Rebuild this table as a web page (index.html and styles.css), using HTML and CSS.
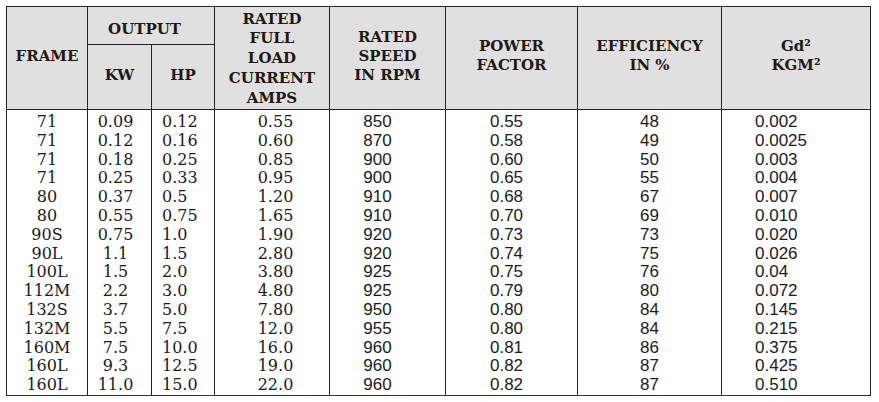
FILE: index.html
```html
<!DOCTYPE html>
<html>
<head>
<meta charset="utf-8">
<link rel="stylesheet" href="styles.css">
</head>
<body>
<table class="spec">
  <colgroup>
    <col class="w-frame"><col class="w-kw"><col class="w-hp"><col class="w-cur">
    <col class="w-spd"><col class="w-pf"><col class="w-eff"><col class="w-gd">
  </colgroup>
  <thead>
    <tr class="h1">
      <th rowspan="2" class="h-frame">FRAME</th>
      <th colspan="2" class="h-output">OUTPUT</th>
      <th rowspan="2" class="h-cur">RATED<br>FULL<br>LOAD<br>CURRENT<br>AMPS</th>
      <th rowspan="2" class="h-spd">RATED<br>SPEED<br>IN RPM</th>
      <th rowspan="2" class="h-pf">POWER<br>FACTOR</th>
      <th rowspan="2" class="h-eff">EFFICIENCY<br>IN %</th>
      <th rowspan="2" class="h-gd">Gd²<br>KGM²</th>
    </tr>
    <tr class="h2">
      <th class="h-kw">KW</th>
      <th class="h-hp">HP</th>
    </tr>
  </thead>
  <tbody>
    <tr class="first"><td class="c-frame">71</td><td class="c-kw">0.09</td><td class="c-hp">0.12</td><td class="c-cur">0.55</td><td class="c-spd">850</td><td class="c-pf">0.55</td><td class="c-eff">48</td><td class="c-gd">0.002</td></tr>
    <tr><td class="c-frame">71</td><td class="c-kw">0.12</td><td class="c-hp">0.16</td><td class="c-cur">0.60</td><td class="c-spd">870</td><td class="c-pf">0.58</td><td class="c-eff">49</td><td class="c-gd">0.0025</td></tr>
    <tr><td class="c-frame">71</td><td class="c-kw">0.18</td><td class="c-hp">0.25</td><td class="c-cur">0.85</td><td class="c-spd">900</td><td class="c-pf">0.60</td><td class="c-eff">50</td><td class="c-gd">0.003</td></tr>
    <tr><td class="c-frame">71</td><td class="c-kw">0.25</td><td class="c-hp">0.33</td><td class="c-cur">0.95</td><td class="c-spd">900</td><td class="c-pf">0.65</td><td class="c-eff">55</td><td class="c-gd">0.004</td></tr>
    <tr><td class="c-frame">80</td><td class="c-kw">0.37</td><td class="c-hp">0.5</td><td class="c-cur">1.20</td><td class="c-spd">910</td><td class="c-pf">0.68</td><td class="c-eff">67</td><td class="c-gd">0.007</td></tr>
    <tr><td class="c-frame">80</td><td class="c-kw">0.55</td><td class="c-hp">0.75</td><td class="c-cur">1.65</td><td class="c-spd">910</td><td class="c-pf">0.70</td><td class="c-eff">69</td><td class="c-gd">0.010</td></tr>
    <tr><td class="c-frame">90S</td><td class="c-kw">0.75</td><td class="c-hp">1.0</td><td class="c-cur">1.90</td><td class="c-spd">920</td><td class="c-pf">0.73</td><td class="c-eff">73</td><td class="c-gd">0.020</td></tr>
    <tr><td class="c-frame">90L</td><td class="c-kw">1.1</td><td class="c-hp">1.5</td><td class="c-cur">2.80</td><td class="c-spd">920</td><td class="c-pf">0.74</td><td class="c-eff">75</td><td class="c-gd">0.026</td></tr>
    <tr><td class="c-frame">100L</td><td class="c-kw">1.5</td><td class="c-hp">2.0</td><td class="c-cur">3.80</td><td class="c-spd">925</td><td class="c-pf">0.75</td><td class="c-eff">76</td><td class="c-gd">0.04</td></tr>
    <tr><td class="c-frame">112M</td><td class="c-kw">2.2</td><td class="c-hp">3.0</td><td class="c-cur">4.80</td><td class="c-spd">925</td><td class="c-pf">0.79</td><td class="c-eff">80</td><td class="c-gd">0.072</td></tr>
    <tr><td class="c-frame">132S</td><td class="c-kw">3.7</td><td class="c-hp">5.0</td><td class="c-cur">7.80</td><td class="c-spd">950</td><td class="c-pf">0.80</td><td class="c-eff">84</td><td class="c-gd">0.145</td></tr>
    <tr><td class="c-frame">132M</td><td class="c-kw">5.5</td><td class="c-hp">7.5</td><td class="c-cur">12.0</td><td class="c-spd">955</td><td class="c-pf">0.80</td><td class="c-eff">84</td><td class="c-gd">0.215</td></tr>
    <tr><td class="c-frame">160M</td><td class="c-kw">7.5</td><td class="c-hp">10.0</td><td class="c-cur">16.0</td><td class="c-spd">960</td><td class="c-pf">0.81</td><td class="c-eff">86</td><td class="c-gd">0.375</td></tr>
    <tr><td class="c-frame">160L</td><td class="c-kw">9.3</td><td class="c-hp">12.5</td><td class="c-cur">19.0</td><td class="c-spd">960</td><td class="c-pf">0.82</td><td class="c-eff">87</td><td class="c-gd">0.425</td></tr>
    <tr class="last"><td class="c-frame">160L</td><td class="c-kw">11.0</td><td class="c-hp">15.0</td><td class="c-cur">22.0</td><td class="c-spd">960</td><td class="c-pf">0.82</td><td class="c-eff">87</td><td class="c-gd">0.510</td></tr>
  </tbody>
</table>
</body>
</html>
```
FILE: styles.css
```css
html, body {
  margin: 0;
  padding: 0;
  background: #ffffff;
}

body {
  padding: 6px 0 0 6px;
}

.spec {
  border-collapse: collapse;
  table-layout: fixed;
  width: 864px;
  color: #1b1b1b;
}

.w-frame { width: 81px; }
.w-kw { width: 64px; }
.w-hp { width: 63px; }
.w-cur { width: 115px; }
.w-spd { width: 116px; }
.w-pf { width: 132px; }
.w-eff { width: 144px; }
.w-gd { width: 149px; }

.spec th {
  background: #e0e0e0;
  border: 1.5px solid #222;
  font-family: "DejaVu Serif", "Liberation Serif", serif;
  font-weight: bold;
  font-size: 15px;
  line-height: 19px;
  padding: 0 0 4px 0;
  vertical-align: middle;
  text-align: center;
  color: #22180f;
}

.h1 { height: 38px; }
.h2 { height: 65px; }

.h-frame { padding-right: 5px; }
.spec th.h-output { padding: 8px 13px 0 0; }
.h-hp { padding-left: 6px; }
.spec th.h-cur { line-height: 19.8px; padding: 2px 0 0 0; }
.h-spd { padding-right: 8px; }
.h-eff { padding-left: 10px; }
.h-gd { padding-right: 30px; }

.spec td {
  border-left: 1.5px solid #222;
  border-right: 1.5px solid #222;
  padding: 0;
  line-height: 18.8px;
  height: 18.8px;
  white-space: nowrap;
}

.spec tr.first td { padding-top: 3px; }
.spec tr.last td { border-bottom: 1.5px solid #333; padding-bottom: 0; }

.c-frame, .c-kw, .c-hp, .c-cur {
  font-family: "DejaVu Serif", "Liberation Serif", serif;
  font-size: 16px;
}

.c-spd, .c-pf, .c-eff, .c-gd {
  font-family: "Liberation Sans", Arial, sans-serif;
  font-size: 17px;
}

.c-frame { text-align: center; }
.c-kw { text-align: center; padding-right: 8px !important; }
.c-hp { text-align: left; padding-left: 10px !important; }
.c-cur { text-align: center; padding-left: 7px !important; }
.c-spd { text-align: center; padding-right: 20px !important; }
.c-pf { text-align: center; padding-right: 10px !important; }
.c-eff { text-align: center; }
.c-gd { text-align: left; padding-left: 33px !important; }
```
